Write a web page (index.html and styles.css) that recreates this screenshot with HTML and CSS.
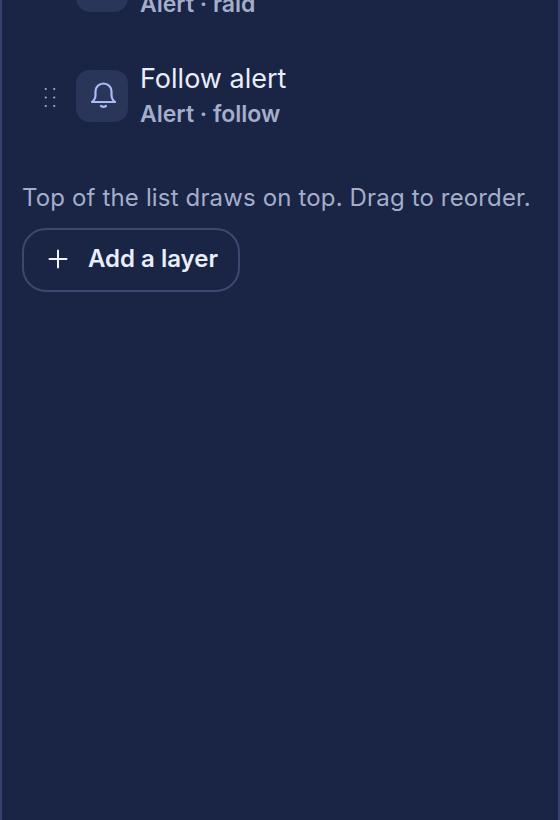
FILE: index.html
```html
<!DOCTYPE html>
<html lang="en">

<head>
  <meta charset="UTF-8" />
  <meta name="viewport" content="width=device-width, initial-scale=1.0" />
  <title>Layers</title>
  <link rel="stylesheet" href="styles.css">
</head>

<body>
  <div class="panel">
    <!-- Layer list, scrolled so the first row is cut off -->
    <div class="layer-list">
      <div class="layer">
        <div class="handle"></div>
        <div class="layer-icon"></div>
        <div class="layer-text">
          <div class="layer-name">Raid alert</div>
          <div class="layer-type">Alert · raid</div>
        </div>
      </div>
      <div class="layer">
        <div class="handle">
          <svg width="12" height="23" viewBox="0 0 12 23" fill="#a3afd0">
            <circle cx="1.750" cy="3" r="1.100" />
            <circle cx="10.250" cy="3" r="1.100" />
            <circle cx="1.750" cy="11.500" r="1.100" />
            <circle cx="10.250" cy="11.500" r="1.100" />
            <circle cx="1.750" cy="20" r="1.100" />
            <circle cx="10.250" cy="20" r="1.100" />
          </svg>
        </div>
        <div class="layer-icon">
          <svg width="30" height="30" viewBox="0 0 30 30" fill="none" stroke="#a8bcf5" stroke-width="2.200"
            stroke-linecap="round" stroke-linejoin="round">
            <path d="M5 21c2.200-1.600 3.500-3.500 3.500-7v-3.500a8 8 0 0 1 16 0V14c0 3.500 1.300 5.400 3.500 7z" />
            <path d="M14 25c1.500 1 3.500 1 5 0" />
          </svg>
        </div>
        <div class="layer-text">
          <div class="layer-name">Follow alert</div>
          <div class="layer-type">Alert · follow</div>
        </div>
      </div>
    </div>

    <p class="hint">Top of the list draws on top. Drag to reorder.</p>

    <button class="add-btn">
      <svg width="20" height="20" viewBox="0 0 20 20" fill="none" stroke="#f1f5ff" stroke-width="2"
        stroke-linecap="round">
        <path d="M10 1.500v17M1.500 10h17" />
      </svg>
      <span class="add-label">Add a layer</span>
    </button>
  </div>
</body>

</html>
```

FILE: styles.css
```css
/* General Styles */
html,
body {
  margin: 0;
  padding: 0;
  height: 100%;
}

body {
  font-family: Inter, "Liberation Sans", sans-serif;
  background: #1a2444;
  overflow: hidden;
}

.panel {
  box-sizing: border-box;
  height: 820px;
  padding: 0 20px;
  border-left: 2px solid #35416f;
  border-right: 2px solid #35416f;
  background: #1a2444;
  overflow: hidden;
}

/* Layer rows */
.layer-list {
  display: flex;
  flex-direction: column;
  gap: 58px;
  margin-top: -40px;
}

.layer {
  display: flex;
  align-items: center;
  height: 52px;
}

.handle {
  display: flex;
  justify-content: center;
  width: 12px;
  margin-left: 22px;
  margin-right: 20px;
  padding-top: 3px;
}

.layer-icon {
  display: flex;
  align-items: center;
  justify-content: center;
  width: 52px;
  height: 52px;
  flex-shrink: 0;
  border-radius: 14px;
  background: #2a3659;
}

.layer-text {
  margin-left: 12px;
}

.layer-name {
  font-size: 27px;
  line-height: 36px;
  color: #e8eefc;
}

.layer-type {
  font-size: 23px;
  line-height: 34px;
  font-weight: 600;
  color: #a4aecb;
}

/* Footer bits */
.hint {
  margin: 59px 0 0;
  font-size: 24px;
  line-height: 34px;
  letter-spacing: 0.15px;
  color: #a4aecb;
  white-space: nowrap;
}

.add-btn {
  display: flex;
  align-items: center;
  gap: 20px;
  height: 64px;
  margin-top: 13px;
  padding: 0 20px 2px 24px;
  border: 2px solid #3c4870;
  border-radius: 24px;
  background: transparent;
  font-family: inherit;
  font-size: 24px;
  font-weight: 600;
  color: #e8eefc;
}

.add-label {
  padding-bottom: 2px;
}
```
